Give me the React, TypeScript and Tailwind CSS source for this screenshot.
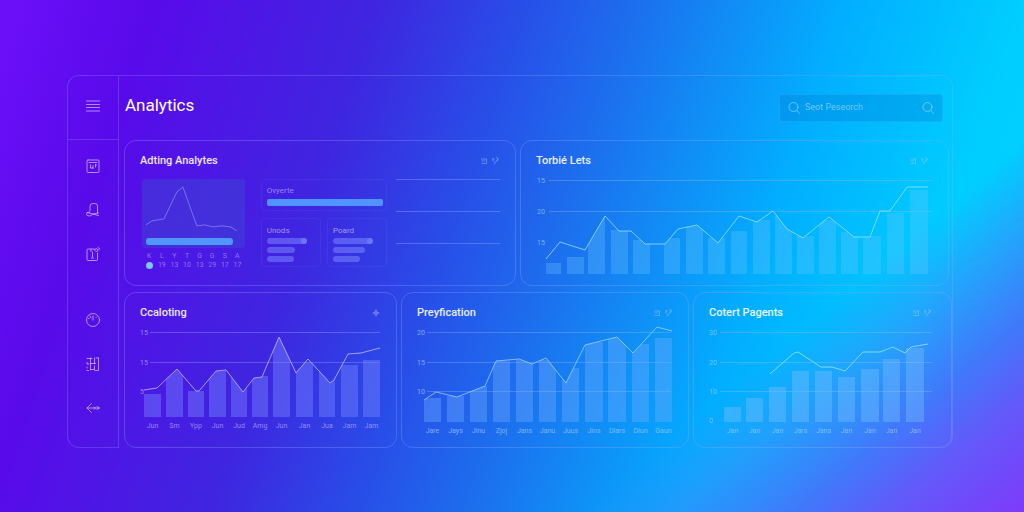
import { useId, type ReactNode } from "react";

type Bar = [x: number, width: number, top: number];
type Tick = { y: number; label: string; line?: boolean };

type ChartProps = {
  title: string;
  viewBox: string;
  bottom: number;
  labelX: number;
  gridFrom: number;
  gridTo: number;
  ticks: Tick[];
  bars: Bar[];
  line: string;
  clipToLine?: boolean;
  months?: string[];
  barClass: string;
  lineClass: string;
  labelClass: string;
};

function Chart(p: ChartProps) {
  const id = useId();
  const points = p.line.split(" ");
  const firstX = points[0].split(",")[0];
  const lastX = points[points.length - 1].split(",")[0];
  const area = `${firstX},${p.bottom} ${p.line} ${lastX},${p.bottom}`;
  return (
    <svg viewBox={p.viewBox} role="img" aria-label={p.title} className="mt-[3px] block h-auto w-full overflow-visible">
      <clipPath id={id}>
        <polygon points={area} />
      </clipPath>
      {p.ticks.map((t) => (
        <g key={t.y}>
          {t.line !== false && (
            <line x1={p.gridFrom} x2={p.gridTo} y1={t.y} y2={t.y} className="stroke-[#a9c4ff]/30" />
          )}
          <text x={p.labelX} y={t.y + 2} className={`text-[7px] ${p.labelClass}`}>
            {t.label}
          </text>
        </g>
      ))}
      <g clipPath={p.clipToLine ? `url(#${id})` : undefined} className={p.barClass}>
        {p.bars.map(([x, width, top]) => (
          <rect key={x} x={x} y={top} width={width} height={p.bottom - top} />
        ))}
      </g>
      <polyline points={p.line} fill="none" strokeLinejoin="round" className={p.lineClass} />
      {p.months?.map((m, i) => (
        <text
          key={i}
          x={p.bars[i][0] + p.bars[i][1] / 2}
          y={p.bottom + 11}
          textAnchor="middle"
          className={`text-[7px] ${p.labelClass}`}
        >
          {m}
        </text>
      ))}
    </svg>
  );
}

function CardIcons() {
  return (
    <svg viewBox="0 0 20 10" className="h-[10px] w-5 fill-none stroke-[#b9d0ff]/40" aria-hidden="true">
      <path d="M1 3h6M1.500 5h3.500M1.500 7.500h5M6.500 3v4.500M13 2v3l1.500 1M16 1.500l2.500 1-1.500 2.500M14 8.500l4-5.500M12.500 3h2" />
    </svg>
  );
}

function SparkIcon() {
  return (
    <svg viewBox="0 0 10 10" className="h-[10px] w-[10px] fill-[#b9b0ff]/40 stroke-[#b9b0ff]/30" aria-hidden="true">
      <path d="M5 1.500l1 2.500 2.500 1-2.500 1-1 2.500-1-2.500-2.500-1 2.500-1z" />
    </svg>
  );
}

function Card({ title, action, inset, children }: { title: string; action: ReactNode; inset?: boolean; children: ReactNode }) {
  return (
    <section className="min-w-0 rounded-xl border border-[#96aaff]/30 px-[15px] pt-3 pb-2">
      <header className={`flex h-4 items-center justify-between ${inset ? "pr-1" : ""}`}>
        <h2 className="text-[11px] leading-4 font-medium text-white/90">{title}</h2>
        {action}
      </header>
      {children}
    </section>
  );
}

function NavButton({ label, children }: { label: string; children: ReactNode }) {
  return (
    <button type="button" aria-label={label} className="flex h-7 w-7 items-center justify-center">
      <svg viewBox="0 0 16 16" className="h-4 w-4 fill-none stroke-[#d4b8ff]/75" strokeLinecap="round" strokeLinejoin="round">
        {children}
      </svg>
    </button>
  );
}

function Sidebar() {
  return (
    <aside className="flex w-[51px] shrink-0 flex-col rounded-bl-xl border-r border-b border-[#96aaff]/25">
      <div className="flex h-16 items-center justify-center border-b border-[#96aaff]/25 pb-1">
        <NavButton label="Menu">
          <path d="M1.500 3h13M1.500 6.500h13M1.500 9.500h13M1.500 13h13" />
        </NavButton>
      </div>
      <nav className="flex flex-col items-center pt-3">
        <div className="flex flex-col items-center gap-4">
          <NavButton label="Reports">
            <rect x="2" y="2" width="12" height="12.500" rx="1" />
            <path d="M4 4.500h8M5.500 7v3h2.500M8 7.500v3M10.500 6.500v2.500M10.500 7h1" />
          </NavButton>
          <NavButton label="Alerts">
            <path d="M5 9V4q0-2.500 3-2.500h2q2.500 0 2.500 2.500v7M4.500 10q-3 0-3 2t3 2q2 0 3-2l6 1.500M2 10.500l6 1.500 5.500-1" />
          </NavButton>
          <NavButton label="Notes">
            <path d="M9 3H3q-1 0-1 1v9.500q0 1 1 1h8.500q1 0 1-1V7M6 3.500v2M7.500 6v5M6.500 12h2" />
            <path d="M9.500 3.500l2-1 1.500 2-1.500 1zM13 1.500l1.500 1-1 1.500" />
          </NavButton>
        </div>
        <div className="mt-[38px] flex flex-col items-center gap-4">
          <NavButton label="Usage">
            <circle cx="8" cy="8" r="6.500" />
            <path d="M8 4v4M5 4l1 2M11.500 5l-.5.500M3.500 6.500h.500" />
          </NavButton>
          <NavButton label="Boards">
            <path d="M5.500 2v12M9.500 2v5.500M9.500 10v4M13.500 2v12.500h-3M5.500 7.500h5M5.500 13.500h4M11 2h2.500M2 2.500h5M2 6.500v1.500h2M2 11v1M2 14.500h1.500" />
          </NavButton>
          <NavButton label="Back">
            <path d="M6.500 3.500L2 8l4.500 4.500M2 8h12M9 7l1.500 1L9 9.500M12 6.500L14.500 8 12 9.500" />
          </NavButton>
        </div>
      </nav>
    </aside>
  );
}

function SearchIcon() {
  return (
    <svg viewBox="0 0 14 14" className="h-[14px] w-[14px] shrink-0 fill-none stroke-[#8fd4ff]/70" strokeLinecap="round" aria-hidden="true">
      <circle cx="6.500" cy="6" r="4.500" />
      <path d="M10 9.500l2.500 3" />
    </svg>
  );
}

function MiniList({ title, widths, dot }: { title: string; widths: string[]; dot?: boolean }) {
  return (
    <div className="flex flex-col gap-[3px] rounded-sm border border-[#8c96ff]/10 px-[5px] pt-2 pb-1">
      <h3 className="text-[8px] leading-2 text-[#cfc8ff]/70">{title}</h3>
      {widths.map((w, i) => (
        <div key={w} className={`flex h-[6px] items-center rounded-[3px] bg-[#7d8cff]/50 ${w}`}>
          {i === 0 && dot && <span className="ml-auto h-[6px] w-[6px] rounded-full bg-[#7d8cff]/50" />}
        </div>
      ))}
    </div>
  );
}

function Overview() {
  const days = ["K", "L", "Y", "T", "G", "G", "S", "A"];
  const dates = ["", "19", "13", "10", "13", "29", "17", "17"];
  return (
    <div className="mt-[10px] grid grid-cols-[103fr_143fr_113fr] pl-[2px]">
      <div>
        <div className="rounded-sm bg-[#3c46d2]/50 pb-[3px]">
          <svg viewBox="0 0 103 59" className="block h-auto w-full fill-none stroke-[#8d8cff]/70" role="img" aria-label="Activity">
            <polyline points="4,46 10,42 22,40 35,13 41,8 55,47 63,46 71,48 80,47 89,48 95,52" strokeLinejoin="round" />
          </svg>
          <div className="mr-3 ml-1 h-[7px] rounded-[3px] bg-[#5096ff]" />
        </div>
        <div className="mt-1 grid grid-cols-8 px-px text-center text-[7px] leading-[9px] text-[#b9b4ff]/60">
          {days.map((d, i) => (
            <span key={i}>{d}</span>
          ))}
          {dates.map((d, i) =>
            d ? (
              <span key={i}>{d}</span>
            ) : (
              <span key={i} className="mt-px ml-[3px] h-[7px] w-[7px] rounded-full bg-[#78c8ff]" />
            ),
          )}
        </div>
      </div>
      <div className="ml-4">
        <div className="rounded-sm border border-[#8c96ff]/10 pt-[6px] pr-[3px] pb-1 pl-[5px]">
          <h3 className="text-[8px] leading-[10px] text-[#cfc8ff]/60">Ovyerte</h3>
          <div className="mt-[3px] h-[7px] rounded-[2px] bg-[#4f94ff]" />
        </div>
        <div className="mt-[7px] grid grid-cols-2 gap-[6px]">
          <MiniList title="Unods" widths={["w-10/12", "w-7/12", "w-[56%]"]} dot />
          <MiniList title="Poard" widths={["w-10/12", "w-8/12", "w-[56%]"]} dot />
        </div>
      </div>
      <div className="ml-[9px] flex flex-col gap-[31px]">
        <hr className="border-[#a0b4ff]/35" />
        <hr className="border-[#a0b4ff]/35" />
        <hr className="border-[#a0b4ff]/35" />
      </div>
    </div>
  );
}

export default function App() {
  return (
    <div className="min-h-screen bg-[linear-gradient(140deg,rgba(56,140,250,0)_73%,rgba(56,140,250,0.6)_79%,rgba(68,116,250,0.95)_86%,#6458fa_92%,#7e3afa_100%),linear-gradient(108deg,#6d0ffa_0%,#580aea_13%,#4a1ae4_24%,#3e26e0_32%,#284ee8_44%,#1c70ee_54%,#128af5_61%,#02aeff_71%,#00ceff_86%,#00d0ff_100%)] pt-[75px] pr-[71px] pb-16 pl-[67px] font-['Roboto','Liberation_Sans',sans-serif]">
      <div className="flex rounded-xl border border-b-0 border-[#96aaff]/25">
        <Sidebar />
        <main className="flex min-w-0 flex-1 flex-col pl-[5px]">
          <header className="flex h-16 items-center justify-between pr-[9px]">
            <h1 className="pb-[6px] pl-px text-[17px] leading-6 text-white">Analytics</h1>
            <form role="search" className="flex h-7 w-[164px] items-center gap-1 rounded-[4px] border border-[#50beff]/25 bg-[#0078d2]/30 px-[7px]">
              <SearchIcon />
              <input
                type="search"
                aria-label="Search"
                placeholder="Seot Peseorch"
                className="min-w-0 flex-1 bg-transparent text-[9px] text-white outline-none placeholder:text-[#8fd4ff]/80"
              />
              <button type="submit" aria-label="Submit search">
                <SearchIcon />
              </button>
            </form>
          </header>
          <div className="grid grid-cols-[392fr_429fr] gap-1 pr-[3px]">
            <Card title="Adting Analytes" action={<CardIcons />}>
              <Overview />
            </Card>
            <Card title="Torbié Lets" action={<CardIcons />} inset>
              <Chart
                title="Torbié Lets"
                viewBox="536 172 397 105"
                bottom={274}
                labelX={537}
                gridFrom={549}
                gridTo={932}
                ticks={[
                  { y: 180.5, label: "15" },
                  { y: 211.5, label: "20" },
                  { y: 242.5, label: "15", line: false },
                ]}
                bars={[
                  [545, 16, 263], [567, 17, 257], [588, 17, 217], [611, 17, 230], [633, 17, 240],
                  [664, 16, 238], [686, 17, 226], [708, 17, 238], [731, 16, 231], [753, 17, 220],
                  [775, 17, 215], [797, 17, 236], [819, 17, 220], [841, 17, 232], [863, 18, 236],
                  [887, 17, 213], [910, 18, 190],
                ]}
                line="546,259 560,242 585,250 605,216 619,231 631,231 645,244 665,244 678,229 697,225 718,243 739,216 757,222 773,211 787,229 803,238 829,217 854,237 870,237 880,211 890,211 907,187 928,187"
                clipToLine
                barClass="fill-[#6ec8ff]/30"
                lineClass="stroke-[#a0e6ff]/75"
                labelClass="fill-[#a0d2ff]/70"
              />
            </Card>
          </div>
          <div className="mt-[6px] grid grid-cols-[273fr_288fr_259fr] gap-1">
            <Card title="Ccaloting" action={<SparkIcon />}>
              <Chart
                title="Ccaloting"
                viewBox="140 324 241 115"
                bottom={417}
                labelX={140}
                gridFrom={150}
                gridTo={380}
                ticks={[
                  { y: 332.5, label: "15" },
                  { y: 362.5, label: "15" },
                  { y: 391.5, label: "5", line: false },
                ]}
                bars={[
                  [144, 17, 394], [166, 17, 370], [188, 16, 391], [209, 17, 371], [231, 16, 378],
                  [252, 16, 376], [273, 17, 338], [296, 17, 362], [319, 16, 370], [341, 17, 365], [363, 17, 360],
                ]}
                line="144,390 157,388 177,369 196,391 199,391 216,371 226,370 243,392 254,378 262,377 279,337 296,373 308,359 330,383 334,380 348,354 361,353 380,348"
                clipToLine
                months={["Jun", "Sm", "Ypp", "Jun", "Jud", "Amg", "Jun", "Jan", "Jua", "Jarn", "Jam"]}
                barClass="fill-[#7382ff]/45"
                lineClass="stroke-[#b4b4ff]/85"
                labelClass="fill-[#b4aaff]/75"
              />
            </Card>
            <Card title="Preyfication" action={<CardIcons />}>
              <Chart
                title="Preyfication"
                viewBox="417 324 256 115"
                bottom={422}
                labelX={417}
                gridFrom={427}
                gridTo={671}
                ticks={[
                  { y: 332.5, label: "20" },
                  { y: 362.5, label: "15" },
                  { y: 391.5, label: "10" },
                ]}
                bars={[
                  [424, 17, 398], [447, 17, 396], [470, 17, 386], [493, 17, 361], [516, 17, 360],
                  [539, 17, 360], [562, 17, 368], [585, 18, 342], [608, 18, 338], [632, 17, 344], [655, 17, 338],
                ]}
                line="424,400 436,392 457,397 485,386 496,361 519,359 532,364 546,358 566,383 585,345 617,337 633,353 657,327 672,331"
                clipToLine
                months={["Jare", "Jays", "Jinu", "Zjoj", "Jans", "Janu", "Juus", "Jins", "Diars", "Diun", "Gaun"]}
                barClass="fill-[#6eaaff]/40"
                lineClass="stroke-[#a0d7ff]/75"
                labelClass="fill-[#a0c3ff]/75"
              />
            </Card>
            <Card title="Cotert Pagents" action={<CardIcons />} inset>
              <Chart
                title="Cotert Pagents"
                viewBox="709 324 227 115"
                bottom={422}
                labelX={709}
                gridFrom={720}
                gridTo={932}
                ticks={[
                  { y: 332.5, label: "30" },
                  { y: 362.5, label: "20" },
                  { y: 391.5, label: "10" },
                  { y: 420.5, label: "0", line: false },
                ]}
                bars={[
                  [724, 17, 407], [746, 17, 398], [769, 17, 387], [792, 17, 371], [815, 17, 371],
                  [838, 17, 377], [861, 18, 369], [883, 17, 359], [906, 18, 348],
                ]}
                line="770,374 794,353 798,352 821,367 832,367 845,371 863,352 880,352 893,347 905,353 911,347 928,344"
                months={["Jan", "Jan", "Jan", "Jars", "Jans", "Jan", "Jan", "Jan", "Jan"]}
                barClass="fill-[#78beff]/40"
                lineClass="stroke-[#96e6ff]/80"
                labelClass="fill-[#a0d2ff]/70"
              />
            </Card>
          </div>
        </main>
      </div>
    </div>
  );
}
